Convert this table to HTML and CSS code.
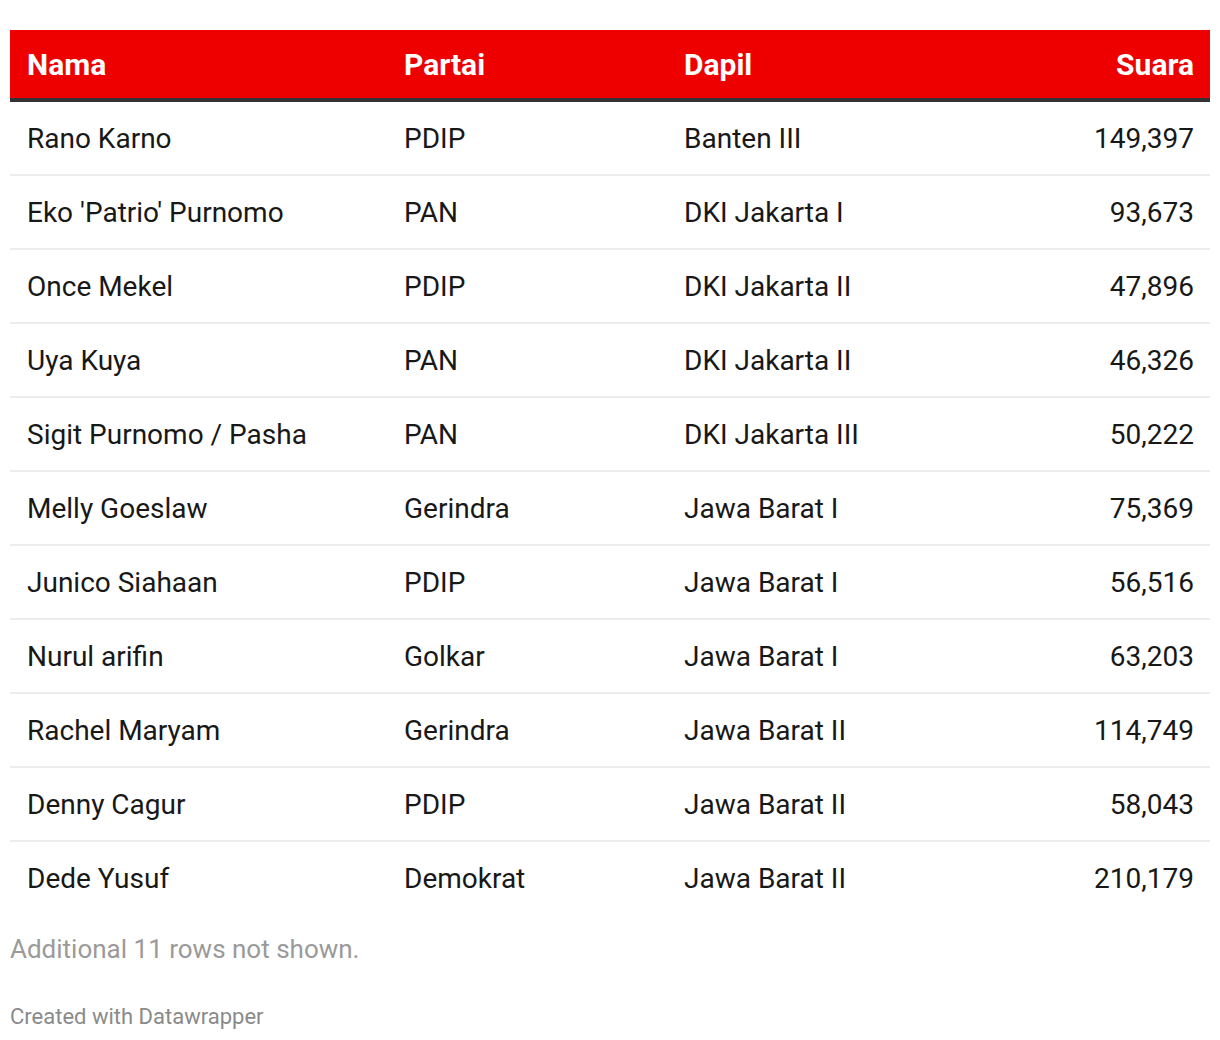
FILE: index.html
```html
<!DOCTYPE html>
<html>
<head>
<meta charset="utf-8">
<link rel="stylesheet" href="styles.css">
</head>
<body>
<div class="chart">
  <table class="dw-table">
    <colgroup>
      <col class="c-nama"><col class="c-partai"><col class="c-dapil"><col class="c-suara">
    </colgroup>
    <thead>
      <tr><th>Nama</th><th>Partai</th><th>Dapil</th><th class="num">Suara</th></tr>
    </thead>
    <tbody>
      <tr><td>Rano Karno</td><td>PDIP</td><td>Banten III</td><td class="num">149,397</td></tr>
      <tr><td>Eko 'Patrio' Purnomo</td><td>PAN</td><td>DKI Jakarta I</td><td class="num">93,673</td></tr>
      <tr><td>Once Mekel</td><td>PDIP</td><td>DKI Jakarta II</td><td class="num">47,896</td></tr>
      <tr><td>Uya Kuya</td><td>PAN</td><td>DKI Jakarta II</td><td class="num">46,326</td></tr>
      <tr><td>Sigit Purnomo / Pasha</td><td>PAN</td><td>DKI Jakarta III</td><td class="num">50,222</td></tr>
      <tr><td>Melly Goeslaw</td><td>Gerindra</td><td>Jawa Barat I</td><td class="num">75,369</td></tr>
      <tr><td>Junico Siahaan</td><td>PDIP</td><td>Jawa Barat I</td><td class="num">56,516</td></tr>
      <tr><td>Nurul arifin</td><td>Golkar</td><td>Jawa Barat I</td><td class="num">63,203</td></tr>
      <tr><td>Rachel Maryam</td><td>Gerindra</td><td>Jawa Barat II</td><td class="num">114,749</td></tr>
      <tr><td>Denny Cagur</td><td>PDIP</td><td>Jawa Barat II</td><td class="num">58,043</td></tr>
      <tr><td>Dede Yusuf</td><td>Demokrat</td><td>Jawa Barat II</td><td class="num">210,179</td></tr>
    </tbody>
  </table>
  <p class="more">Additional 11 rows not shown.</p>
  <p class="credit">Created with Datawrapper</p>
</div>
</body>
</html>
```

FILE: styles.css
```css
html, body {
  margin: 0;
  padding: 0;
  background: #ffffff;
}
body {
  font-family: Roboto, "Liberation Sans", Arial, sans-serif;
  color: #181818;
}
.chart {
  padding: 30px 10px 0 10px;
}
.dw-table {
  width: 1200px;
  border-collapse: collapse;
  table-layout: fixed;
}
.c-nama { width: 377px; }
.c-partai { width: 280px; }
.c-dapil { width: 280px; }
.c-suara { width: 263px; }
.dw-table th {
  background: #ee0000;
  color: #ffffff;
  font-weight: 700;
  font-size: 30px;
  text-align: left;
  height: 70px;
  padding: 0 16px 0 17px;
  border-bottom: 4px solid #333333;
  box-sizing: border-box;
  vertical-align: middle;
}
.dw-table td {
  font-size: 28px;
  height: 72px;
  padding: 0 16px 0 17px;
  vertical-align: middle;
  border-bottom: 2px solid #ededed;
}
.dw-table tbody tr:last-child td {
  border-bottom: none;
}
.dw-table .num {
  text-align: right;
}
.more {
  margin: 19px 0 0 0;
  font-size: 26px;
  color: #9a9a9a;
  line-height: 32px;
}
.credit {
  margin: 39px 0 0 0;
  font-size: 22px;
  color: #8a8a8a;
  line-height: 26px;
}
```
